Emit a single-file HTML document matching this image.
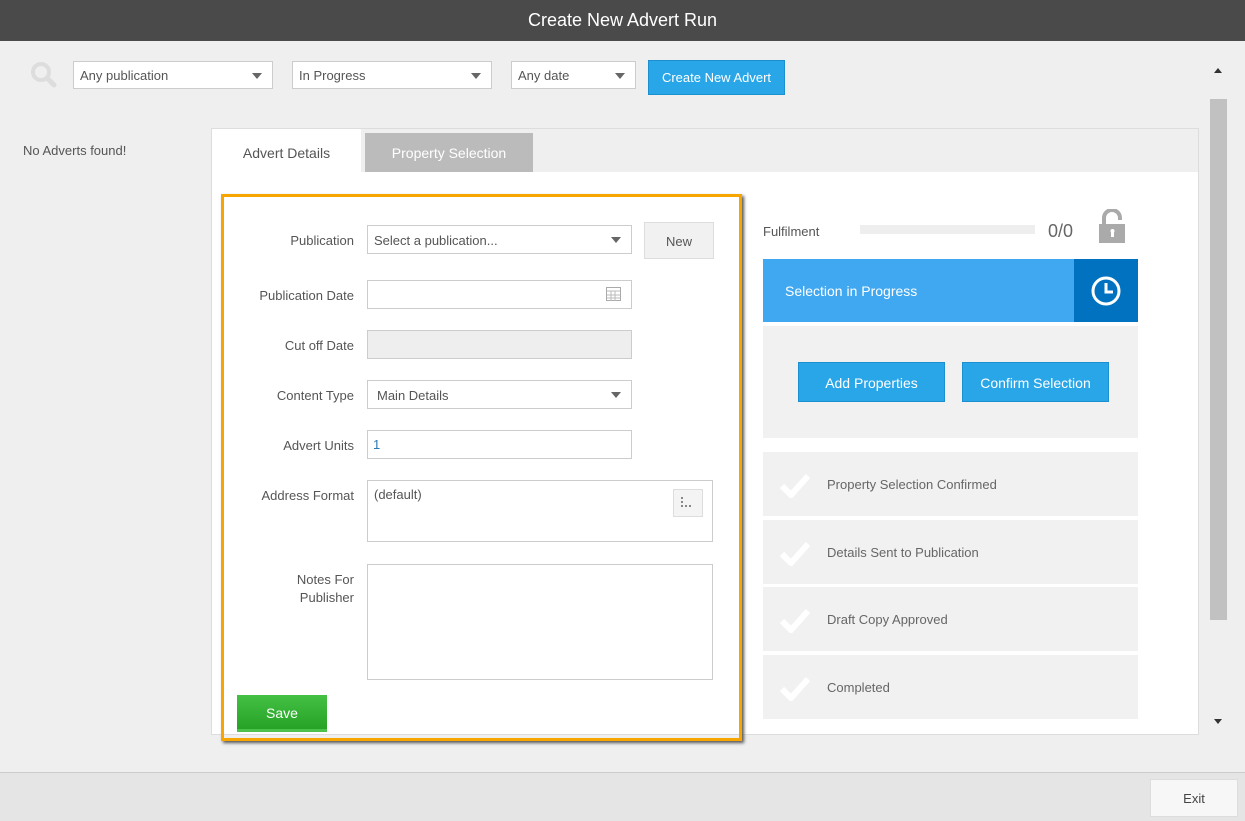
<!DOCTYPE html>
<html><head><style>
*{box-sizing:border-box;margin:0;padding:0}
body{width:1245px;height:821px;position:relative;background:#efefef;font-family:"Segoe UI","Liberation Sans",sans-serif;font-size:13px;color:#555;overflow:hidden}
.a{position:absolute}
.title{left:0;top:0;width:1245px;height:41px;background:#4a4a4a;color:#fff;font-size:18px;text-align:center;line-height:40px}
.sel{background:#fff;border:1px solid #ccc;height:28px;line-height:28px;padding-left:6px;color:#555}
.sel:after{content:"";position:absolute;right:10px;top:11px;border-left:5px solid transparent;border-right:5px solid transparent;border-top:6px solid #666}
.lbl{text-align:right;width:130px;left:224px;color:#555}
.inp{background:#fff;border:1px solid #ccc}
.btn{background:#29a6e8;color:#fff;text-align:center;border:1px solid #1b8fd0}
.step{left:763px;width:375px;height:64px;background:#f1f1f1;line-height:66px;padding-left:64px;color:#666}
.step svg{position:absolute;left:16px;top:20px}
</style></head><body>
<div class="a title">Create New Advert Run</div>
<svg class="a" style="left:28px;top:60px" width="32" height="30"><circle cx="13" cy="12" r="8" fill="none" stroke="#ddd" stroke-width="4"/><line x1="19" y1="18" x2="26" y2="25" stroke="#ddd" stroke-width="5" stroke-linecap="round"/></svg>
<div class="a sel" style="left:73px;top:61px;width:200px">Any publication</div>
<div class="a sel" style="left:292px;top:61px;width:200px">In Progress</div>
<div class="a sel" style="left:511px;top:61px;width:125px">Any date</div>
<div class="a btn" style="left:648px;top:60px;width:137px;height:35px;line-height:33px">Create New Advert</div>
<div class="a" style="left:23px;top:143px">No Adverts found!</div>

<div class="a" style="left:211px;top:128px;width:988px;height:607px;background:#fff;border:1px solid #ddd"></div>
<div class="a" style="left:212px;top:129px;width:986px;height:43px;background:#efefef"></div>
<div class="a" style="left:212px;top:129px;width:149px;height:44px;background:#fff;text-align:center;line-height:48px;color:#555;font-size:14px">Advert Details</div>
<div class="a" style="left:365px;top:133px;width:168px;height:39px;background:#bbb;color:#fff;text-align:center;line-height:40px;font-size:14px">Property Selection</div>

<div class="a" style="left:221px;top:194px;width:521px;height:547px;border:3px solid #f7a500;box-shadow:2px 2px 3px #555"></div>

<div class="a lbl" style="top:233px">Publication</div>
<div class="a sel" style="left:367px;top:225px;width:265px;height:29px;line-height:30px">Select a publication...</div>
<div class="a" style="left:644px;top:222px;width:70px;height:37px;background:#f1f1f1;border:1px solid #ddd;text-align:center;line-height:37px;color:#555">New</div>
<div class="a lbl" style="top:288px">Publication Date</div>
<div class="a inp" style="left:367px;top:280px;width:265px;height:29px"></div>
<svg class="a" style="left:606px;top:287px" width="15" height="14"><rect x="0.5" y="0.5" width="14" height="13" fill="#fff" stroke="#aaa"/><path d="M1 4h13M5 4v10M9 4v10M1 8h13M1 11h13" stroke="#bbb"/></svg>
<div class="a lbl" style="top:338px">Cut off Date</div>
<div class="a" style="left:367px;top:330px;width:265px;height:29px;background:#eee;border:1px solid #ccc"></div>
<div class="a lbl" style="top:388px">Content Type</div>
<div class="a sel" style="left:367px;top:380px;width:265px;height:29px;padding-left:9px;line-height:30px">Main Details</div>
<div class="a lbl" style="top:438px">Advert Units</div>
<div class="a inp" style="left:367px;top:430px;width:265px;height:29px;padding-left:5px;line-height:28px;color:#2a7ab8">1</div>
<div class="a lbl" style="top:488px">Address Format</div>
<div class="a inp" style="left:367px;top:480px;width:346px;height:62px;padding:6px 6px">(default)</div>
<div class="a" style="left:673px;top:489px;width:30px;height:28px;background:#f4f4f4;border:1px solid #ddd"></div>
<svg class="a" style="left:680px;top:496px" width="14" height="12"><g fill="#888"><rect x="1" y="1" width="2" height="2"/><rect x="1" y="5" width="2" height="2"/><rect x="1" y="9" width="2" height="2"/><rect x="5" y="9" width="2" height="2"/><rect x="9" y="9" width="2" height="2"/></g></svg>
<div class="a lbl" style="top:571px;line-height:18px">Notes For<br>Publisher</div>
<div class="a inp" style="left:367px;top:564px;width:346px;height:116px"></div>
<div class="a" style="left:237px;top:695px;width:90px;height:37px;background:linear-gradient(#44c044,#26a326);border-bottom:3px solid #4cc14c;color:#fff;text-align:center;line-height:37px;font-size:14px">Save</div>

<div class="a" style="left:763px;top:224px;color:#555">Fulfilment</div>
<div class="a" style="left:860px;top:225px;width:175px;height:9px;background:#eee"></div>
<div class="a" style="left:1048px;top:221px;font-size:18px;color:#666">0/0</div>
<svg class="a" style="left:1099px;top:209px" width="28" height="36"><path d="M5 15V9a8 8 0 0 1 16 0v2" fill="none" stroke="#aaa" stroke-width="4"/><rect x="0" y="15" width="26" height="19" fill="#aaa"/><rect x="12" y="22" width="3" height="6" fill="#fff"/><circle cx="13.5" cy="22" r="2" fill="#fff"/></svg>
<div class="a" style="left:763px;top:259px;width:311px;height:63px;background:#40a8f0;color:#fff;line-height:65px;padding-left:22px;font-size:14px">Selection in Progress</div>
<div class="a" style="left:1074px;top:259px;width:64px;height:63px;background:#0072c0"></div>
<svg class="a" style="left:1090px;top:275px" width="32" height="32"><circle cx="16" cy="16" r="13" fill="none" stroke="#fff" stroke-width="3"/><path d="M16 8v9h7" fill="none" stroke="#fff" stroke-width="3"/></svg>
<div class="a" style="left:763px;top:326px;width:375px;height:112px;background:#f1f1f1"></div>
<div class="a btn" style="left:798px;top:362px;width:147px;height:40px;line-height:40px;font-size:14px">Add Properties</div>
<div class="a btn" style="left:962px;top:362px;width:147px;height:40px;line-height:40px;font-size:14px">Confirm Selection</div>
<div class="a step" style="top:452px"><svg width="32" height="26"><path d="M3 14l9 9L29 4" fill="none" stroke="#fff" stroke-width="6"/></svg>Property Selection Confirmed</div>
<div class="a step" style="top:520px"><svg width="32" height="26"><path d="M3 14l9 9L29 4" fill="none" stroke="#fff" stroke-width="6"/></svg>Details Sent to Publication</div>
<div class="a step" style="top:587px"><svg width="32" height="26"><path d="M3 14l9 9L29 4" fill="none" stroke="#fff" stroke-width="6"/></svg>Draft Copy Approved</div>
<div class="a step" style="top:655px"><svg width="32" height="26"><path d="M3 14l9 9L29 4" fill="none" stroke="#fff" stroke-width="6"/></svg>Completed</div>

<div class="a" style="left:1208px;top:60px;width:21px;height:675px;background:#efefef"></div>
<div class="a" style="left:1210px;top:99px;width:17px;height:521px;background:#c1c1c1"></div>
<div class="a" style="left:1214px;top:68px;border-left:4px solid transparent;border-right:4px solid transparent;border-bottom:5px solid #333"></div>
<div class="a" style="left:1214px;top:719px;border-left:4px solid transparent;border-right:4px solid transparent;border-top:5px solid #333"></div>

<div class="a" style="left:0;top:772px;width:1245px;height:49px;background:#e5e5e5;border-top:1px solid #ccc"></div>
<div class="a" style="left:1150px;top:779px;width:88px;height:38px;background:#f7f7f7;border:1px solid #ddd;text-align:center;line-height:37px;color:#444">Exit</div>
</body></html>
